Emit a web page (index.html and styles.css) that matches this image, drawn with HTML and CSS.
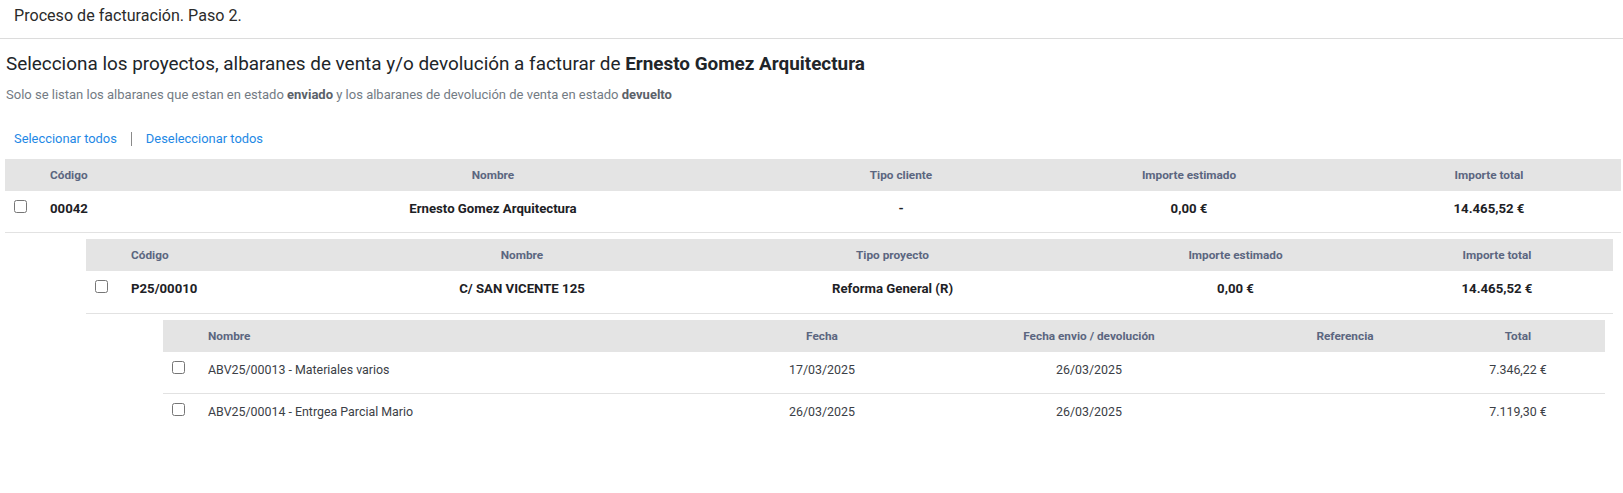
FILE: index.html
```html
<!DOCTYPE html>
<html lang="es">
<head>
    <meta charset="UTF-8">
    <meta name="viewport" content="width=device-width, initial-scale=1.0">
    <title>Proceso de facturación. Paso 2.</title>
    <link rel="stylesheet" href="styles.css">
</head>
<body>
    <div class="topbar">Proceso de facturación. Paso 2.</div>

    <div class="content">
        <h2 class="title">Selecciona los proyectos, albaranes de venta y/o devolución a facturar de <strong>Ernesto Gomez Arquitectura</strong></h2>
        <p class="hint">Solo se listan los albaranes que estan en estado <strong>enviado</strong> y los albaranes de devolución de venta en estado <strong>devuelto</strong></p>

        <div class="select-links">
            <a href="#">Seleccionar todos</a>
            <span class="sep"></span>
            <a href="#">Deseleccionar todos</a>
        </div>

        <!-- clientes -->
        <div class="grid lvl-client">
            <div class="row head">
                <div class="cell"></div>
                <div class="cell left">Código</div>
                <div class="cell">Nombre</div>
                <div class="cell">Tipo cliente</div>
                <div class="cell">Importe estimado</div>
                <div class="cell">Importe total</div>
            </div>
            <div class="row body strong">
                <div class="cell"><input type="checkbox"></div>
                <div class="cell left">00042</div>
                <div class="cell">Ernesto Gomez Arquitectura</div>
                <div class="cell">-</div>
                <div class="cell">0,00 €</div>
                <div class="cell">14.465,52 €</div>
            </div>

            <!-- proyectos -->
            <div class="grid lvl-project">
                <div class="row head">
                    <div class="cell"></div>
                    <div class="cell left">Código</div>
                    <div class="cell">Nombre</div>
                    <div class="cell">Tipo proyecto</div>
                    <div class="cell">Importe estimado</div>
                    <div class="cell">Importe total</div>
                </div>
                <div class="row body strong">
                    <div class="cell"><input type="checkbox"></div>
                    <div class="cell left">P25/00010</div>
                    <div class="cell">C/ SAN VICENTE 125</div>
                    <div class="cell">Reforma General (R)</div>
                    <div class="cell">0,00 €</div>
                    <div class="cell">14.465,52 €</div>
                </div>

                <!-- albaranes -->
                <div class="grid lvl-note">
                    <div class="row head">
                        <div class="cell"></div>
                        <div class="cell left">Nombre</div>
                        <div class="cell">Fecha</div>
                        <div class="cell">Fecha envio / devolución</div>
                        <div class="cell">Referencia</div>
                        <div class="cell">Total</div>
                    </div>
                    <div class="row body">
                        <div class="cell"><input type="checkbox"></div>
                        <div class="cell left">ABV25/00013 - Materiales varios</div>
                        <div class="cell">17/03/2025</div>
                        <div class="cell">26/03/2025</div>
                        <div class="cell"></div>
                        <div class="cell">7.346,22 €</div>
                    </div>
                    <div class="row body last">
                        <div class="cell"><input type="checkbox"></div>
                        <div class="cell left">ABV25/00014 - Entrgea Parcial Mario</div>
                        <div class="cell">26/03/2025</div>
                        <div class="cell">26/03/2025</div>
                        <div class="cell"></div>
                        <div class="cell">7.119,30 €</div>
                    </div>
                </div>
            </div>
        </div>
    </div>
</body>
</html>
```
FILE: styles.css
```css
body {
    margin: 0;
    font-family: 'Roboto', 'Liberation Sans', sans-serif;
    color: #212529;
    background-color: #fff;
}

.topbar {
    font-size: 16.1px;
    line-height: 20px;
    color: #2b2b2b;
    padding: 6px 14px 12px;
    border-bottom: 1px solid #dcdcdc;
}

.content {
    padding: 0 2px 0 5px;
}

.title {
    margin: 13px 0 0 1px;
    font-size: 18.9px;
    line-height: 24px;
    font-weight: 400;
    color: #212529;
}

.title strong {
    font-weight: 700;
}

.hint {
    margin: 10px 0 0 1px;
    font-size: 13px;
    line-height: 18px;
    color: #737b84;
}

.hint strong {
    color: #5a6169;
}

.select-links {
    display: flex;
    align-items: center;
    margin: 25px 0 0 9px;
    font-size: 12.9px;
    line-height: 20px;
}

.select-links a {
    color: #1e88e5;
    text-decoration: none;
}

.sep {
    display: inline-block;
    width: 1px;
    height: 14px;
    margin: 0 14px;
    background-color: #8a8a8a;
}

.lvl-client {
    margin-top: 10px;
}

.lvl-project {
    margin: 6px 8px 0 81px;
}

.lvl-note {
    margin: 6px 8px 0 77px;
}

.row {
    display: grid;
    align-items: start;
}

.lvl-client > .row {
    grid-template-columns: 36px 164px 576px 240px 336px 264px;
}

.lvl-project > .row {
    grid-template-columns: 36px 227px 346px 395px 291px 232px;
}

.lvl-note > .row {
    grid-template-columns: 36px 526px 194px 340px 172px 174px;
}

.cell {
    text-align: center;
    white-space: nowrap;
}

.cell.left {
    text-align: left;
    padding-left: 9px;
}

.head {
    background-color: #e4e4e4;
    padding: 8px 0;
    font-size: 11.8px;
    line-height: 16px;
    font-weight: 700;
    color: #5b6680;
}

.body {
    min-height: 42px;
    box-sizing: border-box;
    padding-top: 8px;
    border-bottom: 1px solid #e2e2e2;
    font-size: 12.4px;
    line-height: 19px;
    color: #3b4046;
}

.body.last {
    border-bottom: none;
}

.body.strong {
    font-size: 13.2px;
    font-weight: 700;
    color: #1d2125;
}

.lvl-project > .body.strong {
    min-height: 43px;
}

.body input[type="checkbox"] {
    display: block;
    margin: 1px 0 0 9px;
    width: 13px;
    height: 13px;
}
```
